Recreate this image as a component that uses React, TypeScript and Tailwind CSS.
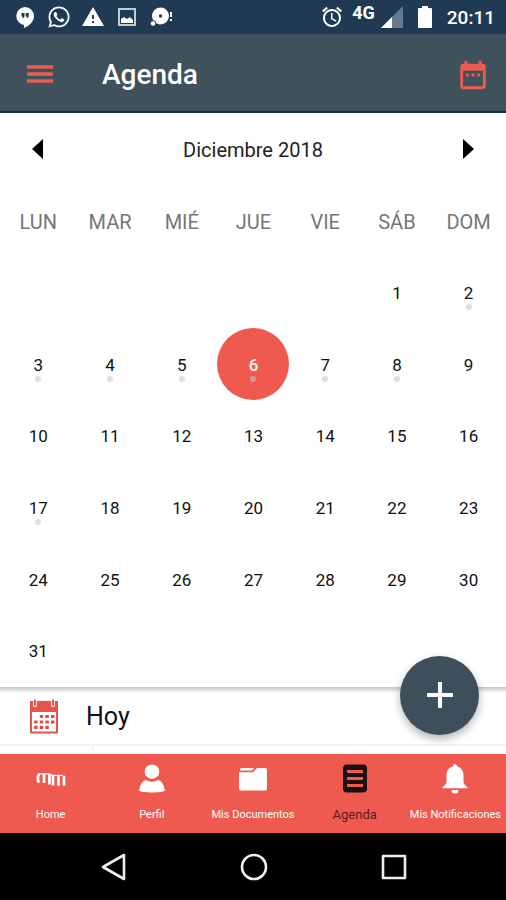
import React from 'react';
import { FaWhatsapp } from 'react-icons/fa';
import { MdAlarm, MdDateRange, MdWarning } from 'react-icons/md';

const weekdays = ['LUN', 'MAR', 'MIÉ', 'JUE', 'VIE', 'SÁB', 'DOM'];
const leadingBlanks = [0, 1, 2, 3, 4];
const days = Array.from({ length: 31 }, (_, i) => i + 1);
const marked = [2, 3, 4, 5, 6, 7, 8, 17];
const selected = 6;

function StatusBar() {
  return (
    <div className="flex h-[34px] items-center justify-between bg-[#203a54] pr-[11px] pl-[15px] text-white">
      <div className="flex items-center">
        <svg className="h-6 w-5" viewBox="0 0 20 24" aria-hidden="true">
          <path d="M10 2a9 9 0 0 0-1 17.900V23c4-1.500 10-6 10-12a9 9 0 0 0-9-9z" fill="#fff" />
          <path d="M6.500 8h3v3.500L8.500 13H7.300l.6-1.500H6.500zM10.700 8h3v3.500l-1 1.500h-1.200l.6-1.500h-1.400z" fill="#203a54" />
        </svg>
        <FaWhatsapp className="ml-3 size-6" />
        <MdWarning className="ml-[10px] size-6" />
        <svg className="ml-3 size-5" viewBox="0 0 20 20" aria-hidden="true">
          <rect x="2" y="2" width="16" height="16" fill="none" stroke="#c3cbd3" strokeWidth="2" />
          <path d="M4 16v-4l3-2 3 2 3-2 3 3v3z" fill="#fff" />
        </svg>
        <svg className="ml-3 h-6 w-6" viewBox="0 0 24 24" aria-hidden="true">
          <circle cx="11.500" cy="11" r="8.500" fill="#fff" />
          <circle cx="11.500" cy="11" r="1.700" fill="#203a54" />
          <circle cx="4" cy="18.500" r="2.800" fill="#fff" stroke="#203a54" />
          <path d="M22 7v5M22 14v2" stroke="#fff" strokeWidth="2" />
        </svg>
      </div>
      <div className="flex items-center">
        <MdAlarm className="size-6" />
        <span className="mb-2 ml-2 text-[18px] leading-5 font-bold">4G</span>
        <svg className="ml-[6px] size-[22px]" viewBox="0 0 22 22" aria-hidden="true">
          <path d="M22 0v22H0z" fill="#667a8e" />
          <path d="M11 11v11H0z" fill="#fff" />
        </svg>
        <svg className="ml-[14px] h-[22px] w-4" viewBox="0 0 16 22" aria-hidden="true">
          <path d="M5 0h6v2h3a1 1 0 0 1 1 1v18a1 1 0 0 1-1 1H2a1 1 0 0 1-1-1V3a1 1 0 0 1 1-1h3z" fill="#fff" />
        </svg>
        <span className="ml-[14px] pt-[2px] text-[19px] leading-6 font-medium">20:11</span>
      </div>
    </div>
  );
}

function Header() {
  return (
    <header className="flex h-[79px] items-center border-b-2 border-[#142f40] bg-[#3f515a] pt-1 pr-4 pl-[27px]">
      <button type="button" aria-label="Menú">
        <svg className="h-5 w-[26px]" viewBox="0 0 26 20" aria-hidden="true">
          <path d="M0 2h26M0 9h26M0 16h26" stroke="#e85c52" strokeWidth="3.500" />
        </svg>
      </button>
      <h1 className="ml-[49px] flex-1 text-[28px] leading-8 font-medium text-white">Agenda</h1>
      <button type="button" aria-label="Calendario">
        <MdDateRange className="size-[34px] text-[#ef5a50]" />
      </button>
    </header>
  );
}

function Calendar() {
  return (
    <section className="px-[2px]">
      <div className="grid grid-cols-7 text-center">
        <button type="button" aria-label="Mes anterior" className="flex aspect-square items-center justify-center">
          <svg className="h-5 w-[11px]" viewBox="0 0 11 20" aria-hidden="true">
            <path d="M11 0v20L0 10z" />
          </svg>
        </button>
        <h2 className="col-span-5 flex items-center justify-center pt-[2px] text-[20px] leading-6 text-[#222]">Diciembre 2018</h2>
        <button type="button" aria-label="Mes siguiente" className="flex aspect-square items-center justify-center">
          <svg className="h-5 w-[11px]" viewBox="0 0 11 20" aria-hidden="true">
            <path d="M0 0v20l11-10z" />
          </svg>
        </button>
        {weekdays.map((name) => (
          <div key={name} className="flex aspect-square items-center justify-center pt-[2px] pl-px text-[20px] leading-6 text-[#767676]">
            {name}
          </div>
        ))}
        {leadingBlanks.map((n) => (
          <div key={n} />
        ))}
        {days.map((day) => (
          <button
            key={day}
            type="button"
            className={
              day === selected
                ? 'flex aspect-square flex-col items-center justify-center rounded-full bg-[#ee5a50] pt-2 pl-px text-[17px] leading-5 font-medium text-white'
                : 'flex aspect-square flex-col items-center justify-center pt-2 pl-px text-[17px] leading-5 text-[#111]'
            }
          >
            {day}
            <span
              className={
                !marked.includes(day)
                  ? 'mt-px size-[6px]'
                  : day === selected
                    ? 'mt-px size-[6px] rounded-full bg-[#dc9590]'
                    : 'mt-px size-[6px] rounded-full bg-[#dfdfdf]'
              }
            />
          </button>
        ))}
      </div>
    </section>
  );
}

function CalendarIcon() {
  return (
    <svg className="h-[35px] w-[28px]" viewBox="0 0 28 35" aria-hidden="true">
      <path d="M1 3h26v30.500H1z" fill="#fff" stroke="#e5554b" strokeWidth="2" />
      <path d="M0 2h28v11H0z" fill="#e5554b" />
      <path d="M5 1v5M23 1v5" stroke="#fff" strokeWidth="4" strokeLinecap="round" />
      <path d="M5 1.500v4.500M23 1.500v4.500" stroke="#e5554b" strokeWidth="2.200" strokeLinecap="round" />
      <path d="M9.800 17.500H24.500" stroke="#d94b44" strokeWidth="3.200" strokeDasharray="3.400 2.200" />
      <path d="M4.200 23H24.500" stroke="#d94b44" strokeWidth="3.200" strokeDasharray="3.400 2.200" />
      <path d="M4.200 28.300H19" stroke="#d94b44" strokeWidth="3.200" strokeDasharray="3.400 2.200" />
    </svg>
  );
}

function Today() {
  return (
    <section className="relative flex flex-1 flex-col">
      <div className="h-[6px] bg-linear-to-b from-[#c4c4c4] to-white" />
      <div className="flex h-[53px] items-center border-b-2 border-[#f3f3f3] pb-1 pl-[30px]">
        <CalendarIcon />
        <h2 className="ml-7 pt-[2px] text-[25px] leading-8 text-[#111]">Hoy</h2>
      </div>
      <div className="ml-[92px] h-1 w-px bg-[#e6e6e6]" />
      <button
        type="button"
        aria-label="Añadir"
        className="absolute -top-[31px] right-[27px] flex size-[79px] items-center justify-center rounded-full bg-[#3c4f5a] shadow-[0_4px_8px_rgba(0,0,0,0.3)]"
      >
        <svg className="size-7" viewBox="0 0 28 28" aria-hidden="true">
          <path d="M14 1v26M1 14h26" stroke="#fff" strokeWidth="4" />
        </svg>
      </button>
    </section>
  );
}

function HomeIcon() {
  return (
    <svg className="h-8 w-[30px]" viewBox="0 0 30 32" fill="none" stroke="#fff" aria-hidden="true">
      <path d="M3.200 19.500L2 18v-4l1-3M8 20v-9M13.500 21.500v-10M17 22.500v-10M22.500 22.800v-10M28 22.500v-8l-.5-1.500" strokeWidth="2.700" />
      <path d="M2 10.800h11l3 1.500h11" strokeWidth="1.300" />
    </svg>
  );
}

function PersonIcon() {
  return (
    <svg className="h-8 w-[26px]" viewBox="0 0 26 32" fill="#fff" aria-hidden="true">
      <circle cx="13" cy="8.700" r="7.300" />
      <path d="M7 17c3.500 2.200 8.500 2.200 12 0 4 1 6 5 6.800 10.500-1 2.600-24.600 2.600-25.600 0C1 22 3 18 7 17z" />
    </svg>
  );
}

function FolderIcon() {
  return (
    <svg className="h-8 w-7" viewBox="0 0 28 32" fill="#fff" aria-hidden="true">
      <path d="M1 7a2 2 0 0 1 1-2h13l-2 2.500H1z" />
      <path d="M0 9.200h14l4-4.200h8a2 2 0 0 1 2 2v18.500a2 2 0 0 1-2 2H2a2 2 0 0 1-2-2z" />
    </svg>
  );
}

function AgendaIcon() {
  return (
    <svg className="h-8 w-6" viewBox="0 0 24 32" aria-hidden="true">
      <rect x="2" y="3.500" width="20" height="24" rx="2" fill="none" stroke="#1b1110" strokeWidth="4" />
      <path d="M2 5h20M2 12h20M2 19h20M2 26h20" stroke="#1b1110" strokeWidth="4" />
    </svg>
  );
}

function BellIcon() {
  return (
    <svg className="h-8 w-[26px]" viewBox="0 0 26 32" fill="#fff" aria-hidden="true">
      <path d="M13 1c1.300 0 2 .9 2 2.500 4.500 1 6.500 4.500 6.500 9V19c0 2 2 3.500 4 5.500v.8H.5v-.8c2-2 4-3.500 4-5.500v-6.500c0-4.500 2-8 6.500-9C11 1.900 11.700 1 13 1z" />
      <path d="M9.500 27h7a3.500 3.500 0 0 1-7 0z" />
    </svg>
  );
}

const tabs = [
  { label: 'Home', Icon: HomeIcon },
  { label: 'Perfil', Icon: PersonIcon },
  { label: 'Mis Documentos', Icon: FolderIcon },
  { label: 'Agenda', Icon: AgendaIcon },
  { label: 'Mis Notificaciones', Icon: BellIcon },
];

function TabBar() {
  return (
    <nav className="grid h-[79px] grid-cols-5 bg-[#ee5a50]">
      {tabs.map(({ label, Icon }) => (
        <a
          key={label}
          href="#"
          aria-current={label === 'Agenda' ? 'page' : undefined}
          className={
            label === 'Agenda'
              ? 'flex flex-col items-center gap-3 pt-[9px] pl-px text-[13px] leading-4 whitespace-nowrap text-[#5a1c18]'
              : 'flex flex-col items-center gap-3 pt-[9px] text-[11px] leading-4 whitespace-nowrap text-white'
          }
        >
          <Icon />
          {label}
        </a>
      ))}
    </nav>
  );
}

function SystemBar() {
  return (
    <div className="flex h-[67px] items-center justify-center gap-28 bg-black pl-px">
      <button type="button" aria-label="Atrás">
        <svg className="size-7" viewBox="0 0 28 28" fill="none" stroke="#eee" strokeWidth="2.600" strokeLinejoin="round" aria-hidden="true">
          <path d="M24 2v24L3 14z" />
        </svg>
      </button>
      <button type="button" aria-label="Inicio">
        <svg className="size-7" viewBox="0 0 28 28" fill="none" stroke="#eee" strokeWidth="2.600" aria-hidden="true">
          <circle cx="14" cy="14" r="12" />
        </svg>
      </button>
      <button type="button" aria-label="Recientes">
        <svg className="size-7" viewBox="0 0 28 28" fill="none" stroke="#eee" strokeWidth="2.600" strokeLinejoin="round" aria-hidden="true">
          <path d="M3 3h22v22H3z" />
        </svg>
      </button>
    </div>
  );
}

export default function App() {
  return (
    <div className="flex min-h-screen flex-col bg-white font-['Roboto',sans-serif]">
      <StatusBar />
      <Header />
      <main className="flex flex-1 flex-col">
        <Calendar />
        <Today />
      </main>
      <TabBar />
      <SystemBar />
    </div>
  );
}
